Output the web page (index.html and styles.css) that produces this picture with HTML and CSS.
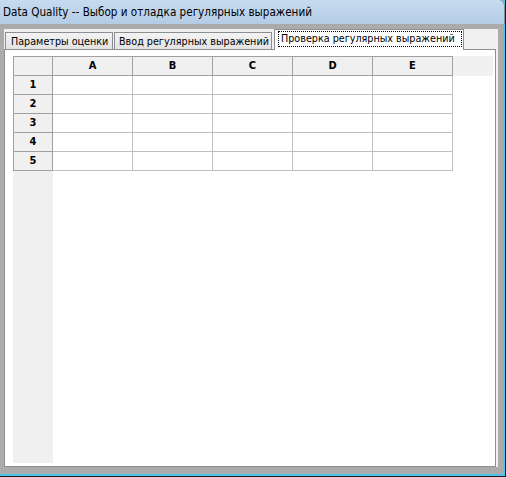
FILE: index.html
```html
<!DOCTYPE html>
<html>
<head>
<meta charset="utf-8">
<link rel="stylesheet" href="styles.css">
</head>
<body>
<div class="window">
  <div class="frame">
    <div class="titlebar">Data Quality -- Выбор и отладка регулярных выражений</div>
    <div class="client">
      <div class="tabs">
        <div class="tab t1">Параметры оценки</div>
        <div class="tab t2">Ввод регулярных выражений</div>
        <div class="tab t3 active"><span class="focus">Проверка регулярных выражений</span></div>
      </div>
      <div class="panel">
        <div class="gridctl">
          <div class="hc corner"></div>
          <div class="hc">A</div>
          <div class="hc">B</div>
          <div class="hc">C</div>
          <div class="hc">D</div>
          <div class="hc">E</div>
          <div class="hfill"></div>

          <div class="rh">1</div><div class="dc"></div><div class="dc"></div><div class="dc"></div><div class="dc"></div><div class="dc"></div><div class="blank"></div>
          <div class="rh">2</div><div class="dc"></div><div class="dc"></div><div class="dc"></div><div class="dc"></div><div class="dc"></div><div class="blank"></div>
          <div class="rh">3</div><div class="dc"></div><div class="dc"></div><div class="dc"></div><div class="dc"></div><div class="dc"></div><div class="blank"></div>
          <div class="rh">4</div><div class="dc"></div><div class="dc"></div><div class="dc"></div><div class="dc"></div><div class="dc"></div><div class="blank"></div>
          <div class="rh">5</div><div class="dc"></div><div class="dc"></div><div class="dc"></div><div class="dc"></div><div class="dc"></div><div class="blank"></div>

          <div class="rfill"></div>
        </div>
      </div>
    </div>
  </div>
</div>
</body>
</html>
```
FILE: styles.css
```css
* { box-sizing: border-box; }
html, body { margin: 0; padding: 0; }
body {
  width: 506px;
  height: 477px;
  overflow: hidden;
  font-family: "DejaVu Sans Condensed", "DejaVu Sans", sans-serif;
  font-stretch: condensed;
  font-size: 11px;
  color: #000;
  background: #fff;
}
.window {
  width: 506px;
  height: 477px;
  border-right: 1px solid #1a1a1a;
  border-bottom: 1px solid #1a1a1a;
}
.frame {
  height: 100%;
  background: #ababab;
  border-right: 2px solid #4cc4f0;
  border-bottom: 2px solid #4cc4f0;
  display: flex;
  flex-direction: column;
}
.titlebar {
  height: 24px;
  padding-left: 3px;
  line-height: 25px;
  font-size: 11.6px;
  background: linear-gradient(#c6dbf0, #b4cce6);
  border-top-right-radius: 6px;
  border-right: 1px solid #7890a8;
  margin-right: -2px;
  white-space: nowrap;
}
.client {
  margin: 5px 0 0 4px;
  width: 494px;
  height: 438px;
  background: #f0f0f0;
  display: flex;
  flex-direction: column;
}
.tabs {
  display: flex;
  align-items: flex-end;
  height: 20px;
  padding-left: 1px;
  font-size: 10.7px;
}
.tab {
  height: 17px;
  border: 1px solid #8c8e94;
  border-bottom: none;
  background: linear-gradient(#f3f3f3, #e3e3e3);
  white-space: nowrap;
  padding-left: 5px;
  line-height: 17px;
}
.t1 { width: 108px; margin-right: 1px; }
.t2 { width: 158px; padding-left: 4px; }
.t3 {
  width: 190px;
  height: 21px;
  margin-left: 2px;
  margin-bottom: -1px;
  background: #fff;
  padding: 1px 1px 0 3px;
  position: relative;
  z-index: 1;
}
.focus {
  display: block;
  height: 16px;
  outline: 1px dotted #000;
  outline-offset: -1px;
  padding-left: 3px;
  line-height: 16px;
}
.panel {
  width: 492px;
  height: 418px;
  background: #fff;
  border: 1px solid #8c8e94;
  padding: 6px 2px 3px 8px;
}
.gridctl {
  height: 100%;
  display: grid;
  grid-template-columns: 40px repeat(5, 80px) 1fr;
  grid-template-rows: 20px repeat(5, 19px) 1fr;
  background: #fff;
}
.hc {
  background: #f0f0f0;
  border-top: 1px solid #a0a0a0;
  border-right: 1px solid #a0a0a0;
  border-bottom: 1px solid #a0a0a0;
  font-weight: bold;
  text-align: center;
  line-height: 18px;
}
.corner { border-left: 1px solid #a0a0a0; }
.hfill { background: #f0f0f0; }
.rh {
  background: #f0f0f0;
  border-left: 1px solid #a0a0a0;
  border-right: 1px solid #a0a0a0;
  border-bottom: 1px solid #a0a0a0;
  font-weight: bold;
  text-align: center;
  line-height: 18px;
}
.dc {
  border-right: 1px solid #c0c0c0;
  border-bottom: 1px solid #c0c0c0;
}
.blank { }
.rfill {
  grid-column: 1;
  background: #f0f0f0;
}
```
